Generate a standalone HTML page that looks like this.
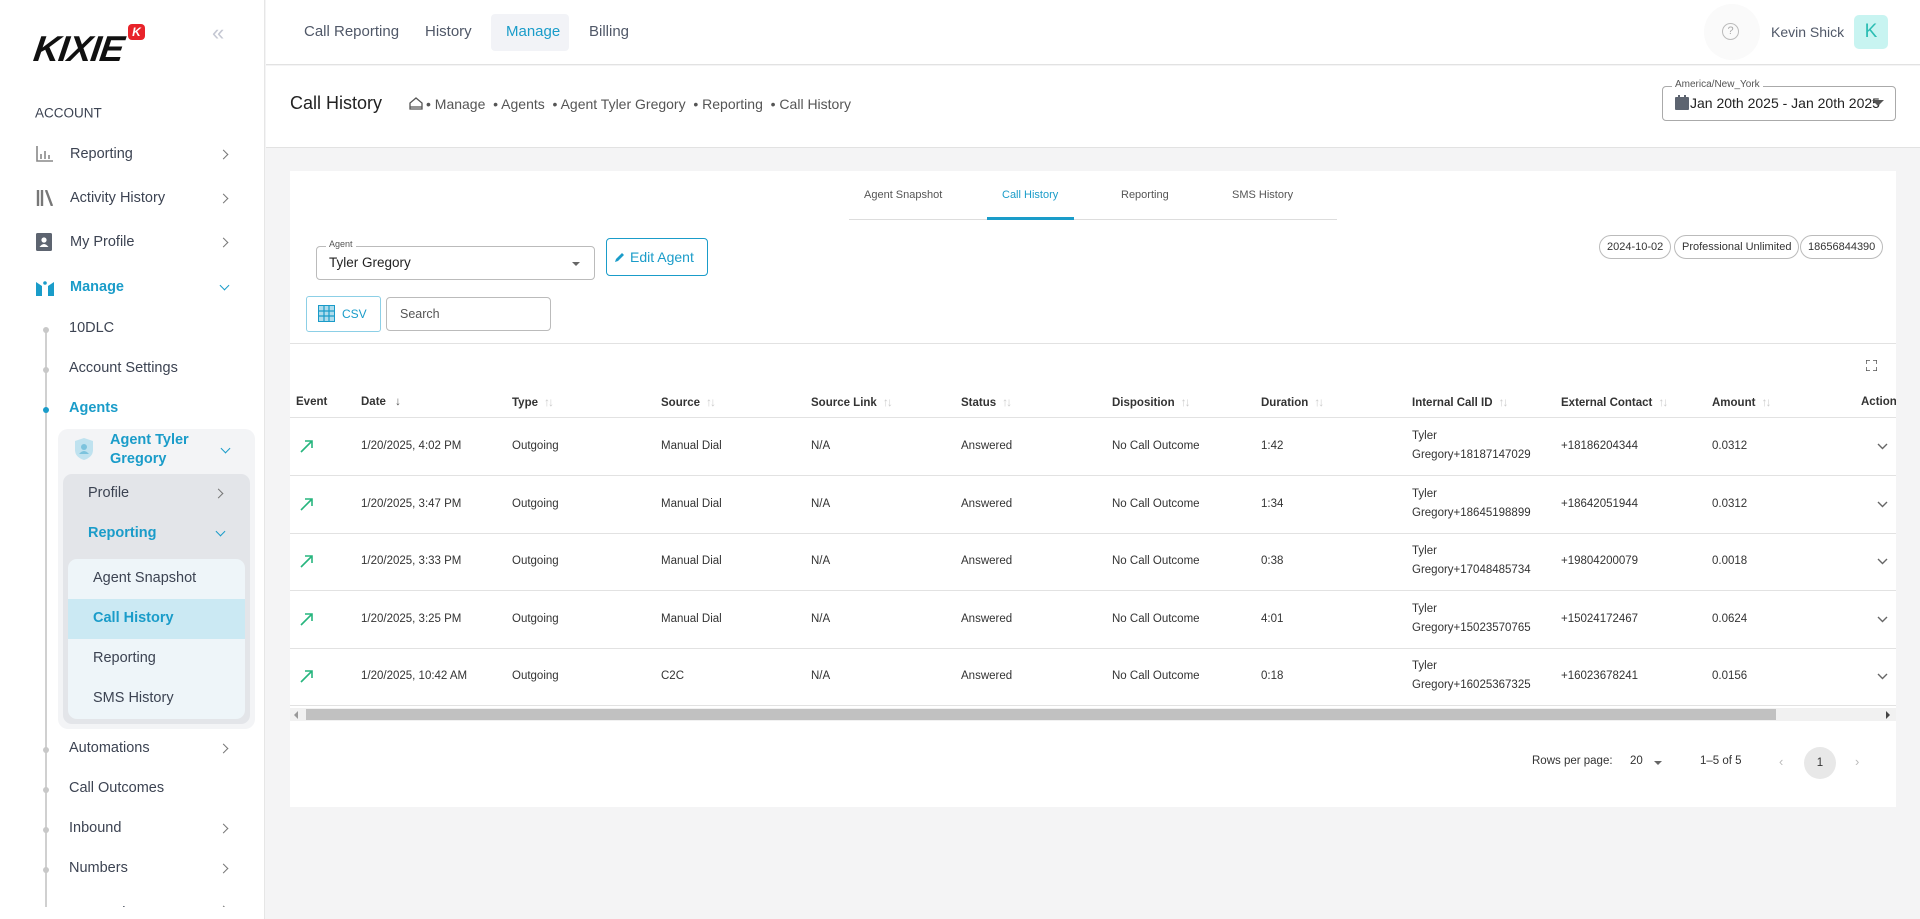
<!DOCTYPE html>
<html><head><meta charset="utf-8"><style>
*{box-sizing:border-box;margin:0;padding:0}
body{width:1920px;height:919px;overflow:hidden;background:#f4f4f5;font-family:"Liberation Sans",sans-serif;color:#3c4352;position:relative}
.a{position:absolute;white-space:nowrap}
#side{position:absolute;left:0;top:0;width:265px;height:919px;background:#fff;border-right:1px solid #e6e6e6;overflow:hidden}
.si{position:absolute;font-size:14.5px;color:#3c4352;transform:translateY(-50%)}
.chev{position:absolute;width:7px;height:7px;border-right:1.5px solid #777;border-top:1.5px solid #777;transform:rotate(45deg)}
.chevd{position:absolute;width:7px;height:7px;border-right:1.5px solid #1a9cc9;border-bottom:1.5px solid #1a9cc9;transform:rotate(45deg)}
.dot{position:absolute;left:43px;width:6px;height:6px;border-radius:50%;background:#c8c8c8}
.blue{color:#1a9cc9!important;font-weight:bold}
#top{position:absolute;left:266px;top:0;right:0;height:65px;background:#fff;border-bottom:1px solid #e2e2e2}
#hdr{position:absolute;left:266px;top:66px;right:0;height:82px;background:#fff;border-bottom:1px solid #e2e2e2}
#card{position:absolute;left:290px;top:171px;width:1606px;height:636px;background:#fff;overflow:hidden}
.th{position:absolute;top:402px;font-size:11.5px;font-weight:bold;color:#333;transform:translateY(-50%)}
.td{position:absolute;font-size:11.5px;color:#333;transform:translateY(-50%)}
.sort{display:inline-block;color:#ccc;font-weight:normal;margin-left:6px;font-size:12px;letter-spacing:-2px}
.hl{position:absolute;left:290px;width:1606px;height:1px;background:#e2e2e2}
.chip{position:absolute;top:64px;height:24px;border:1px solid #bbb;border-radius:12px;font-size:11px;line-height:22px;padding:0 7px;color:#333}
</style></head><body>
<div id="side">
 <div class="a" style="left:34px;top:28px;font:italic 900 36px 'Liberation Sans',sans-serif;color:#111;letter-spacing:-1px;transform:skewX(-8deg)">KIXIE</div>
 <div class="a" style="left:128px;top:24px;width:17px;height:16px;background:#e8232a;border-radius:4px;color:#fff;font:bold italic 12px 'Liberation Sans';text-align:center;line-height:16px">K</div>
 <div class="a" style="left:212px;top:20px;font-size:22px;color:#c5c8d3">«</div>
 <div class="si" style="left:35px;top:113px;font-size:13.5px">ACCOUNT</div>
 <svg class="a" style="left:36px;top:146px" width="18" height="16"><path d="M1 0V15H17M5 13V8M9 13V5M13 13V9" stroke="#888" stroke-width="1.6" fill="none"/></svg>
 <div class="si" style="left:70px;top:154px">Reporting</div><div class="chev" style="left:220px;top:151px"></div>
 <svg class="a" style="left:36px;top:190px" width="18" height="16"><path d="M2 0V16M6 0V16M10 0L16 16" stroke="#777" stroke-width="2.4" fill="none"/></svg>
 <div class="si" style="left:70px;top:198px">Activity History</div><div class="chev" style="left:220px;top:195px"></div>
 <svg class="a" style="left:36px;top:233px" width="18" height="18"><rect x="0" y="0" width="16" height="18" rx="1.5" fill="#5d6470"/><circle cx="8" cy="7" r="2.6" fill="#fff"/><path d="M3.5 14Q8 8 12.5 14Z" fill="#fff"/></svg>
 <div class="si" style="left:70px;top:242px">My Profile</div><div class="chev" style="left:220px;top:239px"></div>
 <svg class="a" style="left:36px;top:280px" width="18" height="16"><path d="M0 2L6 6V16H0ZM18 2L12 6V16H18Z" fill="#1a9cc9"/><circle cx="9" cy="3" r="1.8" fill="#1a9cc9"/></svg>
 <div class="si blue" style="left:70px;top:287px">Manage</div><div class="chevd" style="left:221px;top:282px"></div>
 <div class="a" style="left:45px;top:330px;width:1.5px;height:580px;background:#d0d0d0"></div>
 <div class="dot" style="top:327px"></div><div class="si" style="left:69px;top:328px">10DLC</div>
 <div class="dot" style="top:367px"></div><div class="si" style="left:69px;top:368px">Account Settings</div>
 <div class="dot" style="top:407px;background:#1a9cc9"></div><div class="si blue" style="left:69px;top:408px">Agents</div>
 <div class="a" style="left:58px;top:429px;width:197px;height:300px;background:#f3f4f6;border-radius:10px"></div>
 <svg class="a" style="left:75px;top:438px" width="18" height="22"><path d="M9 0L18 3V12Q18 19 9 22Q0 19 0 12V3Z" fill="#bfe2ef"/><circle cx="9" cy="9" r="3" fill="#7cc3dd"/><path d="M4 16Q9 10 14 16Z" fill="#7cc3dd"/></svg>
 <div class="si blue" style="left:110px;top:440px">Agent Tyler</div><div class="si blue" style="left:110px;top:459px">Gregory</div>
 <div class="chevd" style="left:222px;top:445px"></div>
 <div class="a" style="left:63px;top:474px;width:187px;height:250px;background:#e3e5e9;border-radius:9px"></div>
 <div class="si" style="left:88px;top:493px">Profile</div><div class="chev" style="left:215px;top:490px"></div>
 <div class="si blue" style="left:88px;top:533px">Reporting</div><div class="chevd" style="left:217px;top:528px"></div>
 <div class="a" style="left:68px;top:559px;width:177px;height:160px;background:#eef5f9;border-radius:9px;overflow:hidden"><div style="position:absolute;left:0;top:40px;width:177px;height:40px;background:#cbe9f3"></div></div>
 <div class="si" style="left:93px;top:578px">Agent Snapshot</div>
 <div class="si blue" style="left:93px;top:618px">Call History</div>
 <div class="si" style="left:93px;top:658px">Reporting</div>
 <div class="si" style="left:93px;top:698px">SMS History</div>
 <div class="dot" style="top:747px"></div><div class="si" style="left:69px;top:748px">Automations</div><div class="chev" style="left:220px;top:745px"></div>
 <div class="dot" style="top:787px"></div><div class="si" style="left:69px;top:788px">Call Outcomes</div>
 <div class="dot" style="top:827px"></div><div class="si" style="left:69px;top:828px">Inbound</div><div class="chev" style="left:220px;top:825px"></div>
 <div class="dot" style="top:867px"></div><div class="si" style="left:69px;top:868px">Numbers</div><div class="chev" style="left:220px;top:865px"></div>
 <div class="si" style="left:69px;top:913px">Power Lists</div><div class="chev" style="left:220px;top:907px"></div>
 <div class="a" style="left:0;top:907px;width:264px;height:12px;background:#fff"></div>
</div>
<div id="top">
 <div class="a" style="left:225px;top:14px;width:78px;height:37px;background:#f2f3f7;border-radius:4px"></div>
 <div class="a" style="left:38px;top:23px;font-size:15px;color:#505868">Call Reporting</div>
 <div class="a" style="left:159px;top:23px;font-size:15px;color:#505868">History</div>
 <div class="a" style="left:240px;top:23px;font-size:15px;color:#1a9cc9">Manage</div>
 <div class="a" style="left:323px;top:23px;font-size:15px;color:#505868">Billing</div>
 <div class="a" style="left:1438px;top:4px;width:56px;height:56px;border-radius:50%;background:#fafafa"></div>
 <div class="a" style="left:1456px;top:23px;width:17px;height:17px;border:1.5px solid #bbb;border-radius:50%;font-size:11px;color:#aaa;text-align:center;line-height:14px">?</div>
 <div class="a" style="left:1505px;top:24px;font-size:14px;color:#505868">Kevin Shick</div>
 <div class="a" style="left:1588px;top:15px;width:34px;height:34px;border-radius:5px;background:#c8f4f1;color:#2bbdb3;font-size:19px;text-align:center;line-height:34px">K</div>
</div>
<div id="hdr">
 <div class="a" style="left:24px;top:27px;font-size:18px;color:#222">Call History</div>
 <svg class="a" style="left:143px;top:31px" width="14" height="13"><path d="M1 12V6L7 1L13 6V12ZM1 10H13" stroke="#555" stroke-width="1.3" fill="none"/></svg>
 <div class="a" style="left:160px;top:30px;font-size:14px;color:#555">• Manage &nbsp;• Agents &nbsp;• Agent Tyler Gregory &nbsp;• Reporting &nbsp;• Call History</div>
 <div class="a" style="left:1396px;top:20px;width:234px;height:35px;border:1px solid #aaa;border-radius:4px"></div>
 <div class="a" style="left:1406px;top:13px;background:#fff;padding:0 3px;font-size:10px;color:#555">America/New_York</div>
 <svg class="a" style="left:1409px;top:29px" width="14" height="15"><rect x="0" y="2" width="14" height="13" rx="1" fill="#5d6470"/><rect x="3" y="0" width="2" height="4" fill="#5d6470"/><rect x="9" y="0" width="2" height="4" fill="#5d6470"/></svg>
 <div class="a" style="left:1424px;top:29px;font-size:14px;color:#222">Jan 20th 2025 - Jan 20th 2025</div>
 <div class="a" style="left:1606px;top:34px;border-left:6px solid transparent;border-right:6px solid transparent;border-top:6px solid #555"></div>
</div>
<div id="card">
 <div class="a" style="left:559px;top:48px;width:488px;height:1px;background:#ddd"></div>
 <div class="a" style="left:697px;top:46px;width:87px;height:3px;background:#1a9cc9"></div>
 <div class="a" style="left:574px;top:18px;font-size:11px;color:#555">Agent Snapshot</div>
 <div class="a" style="left:712px;top:18px;font-size:11px;color:#1a9cc9">Call History</div>
 <div class="a" style="left:831px;top:18px;font-size:11px;color:#555">Reporting</div>
 <div class="a" style="left:942px;top:18px;font-size:11px;color:#555">SMS History</div>
 <div class="a" style="left:26px;top:75px;width:279px;height:34px;border:1px solid #bbb;border-radius:4px"></div>
 <div class="a" style="left:36px;top:68px;background:#fff;padding:0 3px;font-size:9px;color:#555">Agent</div>
 <div class="a" style="left:39px;top:84px;font-size:13.5px;color:#222">Tyler Gregory</div>
 <div class="a" style="left:282px;top:91px;border-left:4px solid transparent;border-right:4px solid transparent;border-top:4px solid #666"></div>
 <div class="a" style="left:316px;top:67px;width:102px;height:38px;border:1px solid #1a9cc9;border-radius:4px"></div>
 <svg class="a" style="left:324px;top:80px" width="12" height="12"><path d="M1 11L2 8L8 2L10 4L4 10Z" fill="#1a9cc9"/></svg>
 <div class="a" style="left:340px;top:78px;font-size:14px;color:#1a9cc9">Edit Agent</div>
 <div class="a" style="left:16px;top:125px;width:75px;height:36px;border:1px solid #8ccfe6;border-radius:3px"></div>
 <svg class="a" style="left:28px;top:134px" width="17" height="17"><rect x="0.5" y="0.5" width="16" height="16" fill="none" stroke="#1a9cc9"/><path d="M6 0V17M11 0V17M0 6H17M0 11H17" stroke="#1a9cc9" stroke-width="1.2"/><rect x="0" y="0" width="17" height="17" fill="#1a9cc9" opacity=".35"/></svg>
 <div class="a" style="left:52px;top:136px;font-size:12px;color:#1a9cc9">CSV</div>
 <div class="a" style="left:96px;top:126px;width:165px;height:34px;border:1px solid #bbb;border-radius:4px"></div>
 <div class="a" style="left:110px;top:136px;font-size:12.5px;color:#555">Search</div>
 <div class="chip" style="left:1309px">2024-10-02</div>
 <div class="chip" style="left:1384px">Professional Unlimited</div>
 <div class="chip" style="left:1510px">18656844390</div>
 <div class="a" style="left:0;top:172px;width:1606px;height:1px;background:#e2e2e2"></div>
 <svg class="a" style="left:1576px;top:189px" width="11" height="11"><path d="M0 4V0H4M7 0H11V4M11 7V11H7M4 11H0V7" stroke="#555" stroke-width="1.5" fill="none"/></svg>
</div>
<div class="hl" style="top:417px"></div>
<div class="hl" style="top:475px"></div>
<div class="hl" style="top:533px"></div>
<div class="hl" style="top:590px"></div>
<div class="hl" style="top:648px"></div>
<div class="hl" style="top:705px"></div>
<div class="th" style="left:296px">Event</div>
<div class="th" style="left:361px">Date <span style="color:#555;font-weight:normal;margin-left:6px">↓</span></div>
<div class="th" style="left:512px">Type<span class="sort">↑↓</span></div>
<div class="th" style="left:661px">Source<span class="sort">↑↓</span></div>
<div class="th" style="left:811px">Source Link<span class="sort">↑↓</span></div>
<div class="th" style="left:961px">Status<span class="sort">↑↓</span></div>
<div class="th" style="left:1112px">Disposition<span class="sort">↑↓</span></div>
<div class="th" style="left:1261px">Duration<span class="sort">↑↓</span></div>
<div class="th" style="left:1412px">Internal Call ID<span class="sort">↑↓</span></div>
<div class="th" style="left:1561px">External Contact<span class="sort">↑↓</span></div>
<div class="th" style="left:1712px">Amount<span class="sort">↑↓</span></div>
<div class="th" style="left:1861px">Action</div>
<div class="a" style="left:1896px;top:390px;width:24px;height:340px;background:#f4f4f5"></div>

<div class="a" style="left:290px;top:708px;width:1606px;height:13px;background:#f1f1f1"></div>
<div class="a" style="left:306px;top:709px;width:1470px;height:11px;background:#c1c1c1"></div>
<div class="a" style="left:294px;top:711px;border-top:4px solid transparent;border-bottom:4px solid transparent;border-right:4px solid #999"></div>
<div class="a" style="left:1886px;top:711px;border-top:4px solid transparent;border-bottom:4px solid transparent;border-left:4px solid #444"></div>
<div class="a" style="left:1532px;top:755px;font-size:11.5px;color:#333">Rows per page:</div>
<div class="a" style="left:1630px;top:755px;font-size:11.5px;color:#333">20</div>
<div class="a" style="left:1654px;top:761px;border-left:4px solid transparent;border-right:4px solid transparent;border-top:4px solid #666"></div>
<div class="a" style="left:1700px;top:755px;font-size:11.5px;color:#333">1–5 of 5</div>
<div class="a" style="left:1779px;top:754px;font-size:13px;color:#bbb">‹</div>
<div class="a" style="left:1804px;top:747px;width:32px;height:32px;border-radius:50%;background:#e8e8e8;font-size:11.5px;text-align:center;line-height:32px;color:#333">1</div>
<div class="a" style="left:1855px;top:754px;font-size:13px;color:#bbb">›</div>

<svg class="a" style="left:300px;top:439px" width="14" height="14"><path d="M1 13L12 2M5 2H12V9" stroke="#27b57e" stroke-width="1.6" fill="none"/></svg>
<svg class="a" style="left:300px;top:497px" width="14" height="14"><path d="M1 13L12 2M5 2H12V9" stroke="#27b57e" stroke-width="1.6" fill="none"/></svg>
<svg class="a" style="left:300px;top:554px" width="14" height="14"><path d="M1 13L12 2M5 2H12V9" stroke="#27b57e" stroke-width="1.6" fill="none"/></svg>
<svg class="a" style="left:300px;top:612px" width="14" height="14"><path d="M1 13L12 2M5 2H12V9" stroke="#27b57e" stroke-width="1.6" fill="none"/></svg>
<svg class="a" style="left:300px;top:669px" width="14" height="14"><path d="M1 13L12 2M5 2H12V9" stroke="#27b57e" stroke-width="1.6" fill="none"/></svg>

<div class="td" style="left:361px;top:446px">1/20/2025, 4:02 PM</div><div class="td" style="left:512px;top:446px">Outgoing</div><div class="td" style="left:661px;top:446px">Manual Dial</div><div class="td" style="left:811px;top:446px">N/A</div><div class="td" style="left:961px;top:446px">Answered</div><div class="td" style="left:1112px;top:446px">No Call Outcome</div><div class="td" style="left:1261px;top:446px">1:42</div><div class="td" style="left:1412px;top:446px;line-height:19px">Tyler<br>Gregory+18187147029</div><div class="td" style="left:1561px;top:446px">+18186204344</div><div class="td" style="left:1712px;top:446px">0.0312</div>
<div class="td" style="left:361px;top:504px">1/20/2025, 3:47 PM</div><div class="td" style="left:512px;top:504px">Outgoing</div><div class="td" style="left:661px;top:504px">Manual Dial</div><div class="td" style="left:811px;top:504px">N/A</div><div class="td" style="left:961px;top:504px">Answered</div><div class="td" style="left:1112px;top:504px">No Call Outcome</div><div class="td" style="left:1261px;top:504px">1:34</div><div class="td" style="left:1412px;top:504px;line-height:19px">Tyler<br>Gregory+18645198899</div><div class="td" style="left:1561px;top:504px">+18642051944</div><div class="td" style="left:1712px;top:504px">0.0312</div>
<div class="td" style="left:361px;top:561px">1/20/2025, 3:33 PM</div><div class="td" style="left:512px;top:561px">Outgoing</div><div class="td" style="left:661px;top:561px">Manual Dial</div><div class="td" style="left:811px;top:561px">N/A</div><div class="td" style="left:961px;top:561px">Answered</div><div class="td" style="left:1112px;top:561px">No Call Outcome</div><div class="td" style="left:1261px;top:561px">0:38</div><div class="td" style="left:1412px;top:561px;line-height:19px">Tyler<br>Gregory+17048485734</div><div class="td" style="left:1561px;top:561px">+19804200079</div><div class="td" style="left:1712px;top:561px">0.0018</div>
<div class="td" style="left:361px;top:619px">1/20/2025, 3:25 PM</div><div class="td" style="left:512px;top:619px">Outgoing</div><div class="td" style="left:661px;top:619px">Manual Dial</div><div class="td" style="left:811px;top:619px">N/A</div><div class="td" style="left:961px;top:619px">Answered</div><div class="td" style="left:1112px;top:619px">No Call Outcome</div><div class="td" style="left:1261px;top:619px">4:01</div><div class="td" style="left:1412px;top:619px;line-height:19px">Tyler<br>Gregory+15023570765</div><div class="td" style="left:1561px;top:619px">+15024172467</div><div class="td" style="left:1712px;top:619px">0.0624</div>
<div class="td" style="left:361px;top:676px">1/20/2025, 10:42 AM</div><div class="td" style="left:512px;top:676px">Outgoing</div><div class="td" style="left:661px;top:676px">C2C</div><div class="td" style="left:811px;top:676px">N/A</div><div class="td" style="left:961px;top:676px">Answered</div><div class="td" style="left:1112px;top:676px">No Call Outcome</div><div class="td" style="left:1261px;top:676px">0:18</div><div class="td" style="left:1412px;top:676px;line-height:19px">Tyler<br>Gregory+16025367325</div><div class="td" style="left:1561px;top:676px">+16023678241</div><div class="td" style="left:1712px;top:676px">0.0156</div>

<svg class="a" style="left:1877px;top:443px" width="11" height="7"><path d="M1 1L5.5 5.5L10 1" stroke="#666" stroke-width="1.4" fill="none"/></svg>
<svg class="a" style="left:1877px;top:501px" width="11" height="7"><path d="M1 1L5.5 5.5L10 1" stroke="#666" stroke-width="1.4" fill="none"/></svg>
<svg class="a" style="left:1877px;top:558px" width="11" height="7"><path d="M1 1L5.5 5.5L10 1" stroke="#666" stroke-width="1.4" fill="none"/></svg>
<svg class="a" style="left:1877px;top:616px" width="11" height="7"><path d="M1 1L5.5 5.5L10 1" stroke="#666" stroke-width="1.4" fill="none"/></svg>
<svg class="a" style="left:1877px;top:673px" width="11" height="7"><path d="M1 1L5.5 5.5L10 1" stroke="#666" stroke-width="1.4" fill="none"/></svg>
</body></html>
